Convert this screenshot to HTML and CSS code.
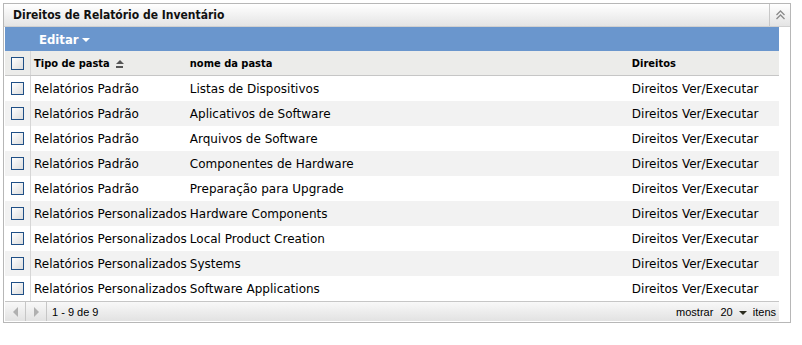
FILE: index.html
```html
<!DOCTYPE html>
<html lang="pt">
<head>
  <meta charset="UTF-8">
  <title>Direitos de Relatório de Inventário</title>
  <link rel="stylesheet" href="styles.css">
</head>
<body>

  <div class="panel">
    <div class="panel-title">
      <span>Direitos de Relatório de Inventário</span>
      <button class="collapse" title="Recolher">
        <svg width="11" height="10" viewBox="0 0 11 10"><path d="M1.5 5 L5.5 1 L9.5 5 M1.5 9 L5.5 5 L9.5 9" fill="none" stroke="#8a8a8a" stroke-width="1.3"/></svg>
      </button>
    </div>

    <div class="panel-body">
      <div class="toolbar">
        <span class="menu">Editar<span class="caret"></span></span>
      </div>

      <table class="grid">
        <thead>
          <tr>
            <th class="check"><span class="box"></span></th>
            <th class="col-type">Tipo de pasta <span class="sort"></span></th>
            <th class="col-name">nome da pasta</th>
            <th class="col-rights">Direitos</th>
          </tr>
        </thead>
        <tbody>
          <tr><td class="check"><span class="box"></span></td><td>Relatórios Padrão</td><td>Listas de Dispositivos</td><td>Direitos Ver/Executar</td></tr>
          <tr><td class="check"><span class="box"></span></td><td>Relatórios Padrão</td><td>Aplicativos de Software</td><td>Direitos Ver/Executar</td></tr>
          <tr><td class="check"><span class="box"></span></td><td>Relatórios Padrão</td><td>Arquivos de Software</td><td>Direitos Ver/Executar</td></tr>
          <tr><td class="check"><span class="box"></span></td><td>Relatórios Padrão</td><td>Componentes de Hardware</td><td>Direitos Ver/Executar</td></tr>
          <tr><td class="check"><span class="box"></span></td><td>Relatórios Padrão</td><td>Preparação para Upgrade</td><td>Direitos Ver/Executar</td></tr>
          <tr><td class="check"><span class="box"></span></td><td>Relatórios Personalizados</td><td>Hardware Components</td><td>Direitos Ver/Executar</td></tr>
          <tr><td class="check"><span class="box"></span></td><td>Relatórios Personalizados</td><td>Local Product Creation</td><td>Direitos Ver/Executar</td></tr>
          <tr><td class="check"><span class="box"></span></td><td>Relatórios Personalizados</td><td>Systems</td><td>Direitos Ver/Executar</td></tr>
          <tr><td class="check"><span class="box"></span></td><td>Relatórios Personalizados</td><td>Software Applications</td><td>Direitos Ver/Executar</td></tr>
        </tbody>
      </table>

      <div class="pager">
        <span class="nav"><span class="arrow-left"></span></span>
        <span class="nav"><span class="arrow-right"></span></span>
        <span class="count">1 - 9 de 9</span>
        <span class="size">mostrar <b>20</b> <span class="caret dark"></span> itens</span>
      </div>
    </div>
  </div>

</body>
</html>
```

FILE: styles.css
```css
body {
  margin: 0;
  font-family: "DejaVu Sans", Verdana, sans-serif;
  font-size: 12px;
  color: #000;
  background-color: #fff;
}
.panel {
  width: 786px;
  margin: 3px;
  border: 1px solid #b7b7b7;
  background-color: #fff;
}
.panel-title {
  display: flex;
  align-items: center;
  height: 22px;
  border-bottom: 1px solid #d0d0d0;
  background: linear-gradient(#ffffff, #e4e4e4);
}
.panel-title span {
  flex: 1;
  padding-left: 9px;
  font-family: "DejaVu Sans Condensed", "DejaVu Sans", sans-serif;
  font-stretch: condensed;
  font-weight: bold;
  font-size: 12px;
  color: #111;
}
.collapse {
  width: 21px;
  height: 22px;
  padding: 0;
  border: none;
  border-left: 1px solid #c8c8c8;
  background: transparent;
  display: flex;
  align-items: center;
  justify-content: center;
}
.panel-body {
  padding: 0 11px 1px 1px;
}
.toolbar {
  height: 24px;
  display: flex;
  align-items: center;
  padding-left: 34px;
  background-color: #6a96cd;
}
.menu {
  color: #fff;
  font-family: "DejaVu Sans Condensed", "DejaVu Sans", sans-serif;
  font-stretch: condensed;
  font-weight: bold;
  font-size: 13px;
}
.caret {
  display: inline-block;
  width: 0;
  height: 0;
  margin-left: 3px;
  border-left: 4px solid transparent;
  border-right: 4px solid transparent;
  border-top: 4px solid #fff;
  vertical-align: middle;
}
.caret.dark {
  border-top-color: #2b2b1e;
  margin: 0 3px;
}
.grid {
  width: 100%;
  border-collapse: collapse;
}
.grid th {
  height: 24px;
  padding: 0 0 0 3px;
  text-align: left;
  font-family: "DejaVu Sans Condensed", "DejaVu Sans", sans-serif;
  font-stretch: condensed;
  font-size: 11px;
  font-weight: bold;
  background-color: #ececea;
  border-bottom: 1px solid #c6c6c6;
}
.grid td {
  height: 25px;
  padding: 0 0 0 3px;
  white-space: nowrap;
}
.grid tbody tr:nth-child(even) td {
  background-color: #f2f2f2;
}
.grid .check {
  width: 19px;
  padding: 0 0 0 6px;
  border-right: 1px solid #d6d6d6;
}
.col-type {
  width: 152px;
}
.col-name {
  width: 439px;
}
.box {
  display: block;
  width: 11px;
  height: 11px;
  border: 1px solid #1f4f86;
  background: linear-gradient(135deg, #ffffff, #dcdcdc);
}
.sort {
  display: inline-block;
  width: 7px;
  height: 6px;
  margin-left: 3px;
  border-bottom: 2px solid #555;
  position: relative;
  vertical-align: middle;
}
.sort::before {
  content: "";
  position: absolute;
  left: 0;
  top: 0;
  border-left: 4px solid transparent;
  border-right: 4px solid transparent;
  border-bottom: 4px solid #555;
}
.pager {
  display: flex;
  align-items: center;
  height: 19px;
  border-top: 1px solid #c6c6c6;
  background: linear-gradient(#f8f8f8, #e2e2e2);
  font-family: "Liberation Sans", Arial, sans-serif;
  font-size: 11px;
}
.nav {
  width: 20px;
  height: 19px;
  border-right: 1px solid #c6c6c6;
  display: flex;
  align-items: center;
  justify-content: center;
}
.arrow-left {
  border-top: 5px solid transparent;
  border-bottom: 5px solid transparent;
  border-right: 5px solid #b0b0b0;
}
.arrow-right {
  border-top: 5px solid transparent;
  border-bottom: 5px solid transparent;
  border-left: 5px solid #b0b0b0;
}
.count {
  flex: 1;
  padding-left: 5px;
}
.size {
  padding-right: 3px;
}
.size b {
  font-weight: normal;
  margin-left: 4px;
}
```
